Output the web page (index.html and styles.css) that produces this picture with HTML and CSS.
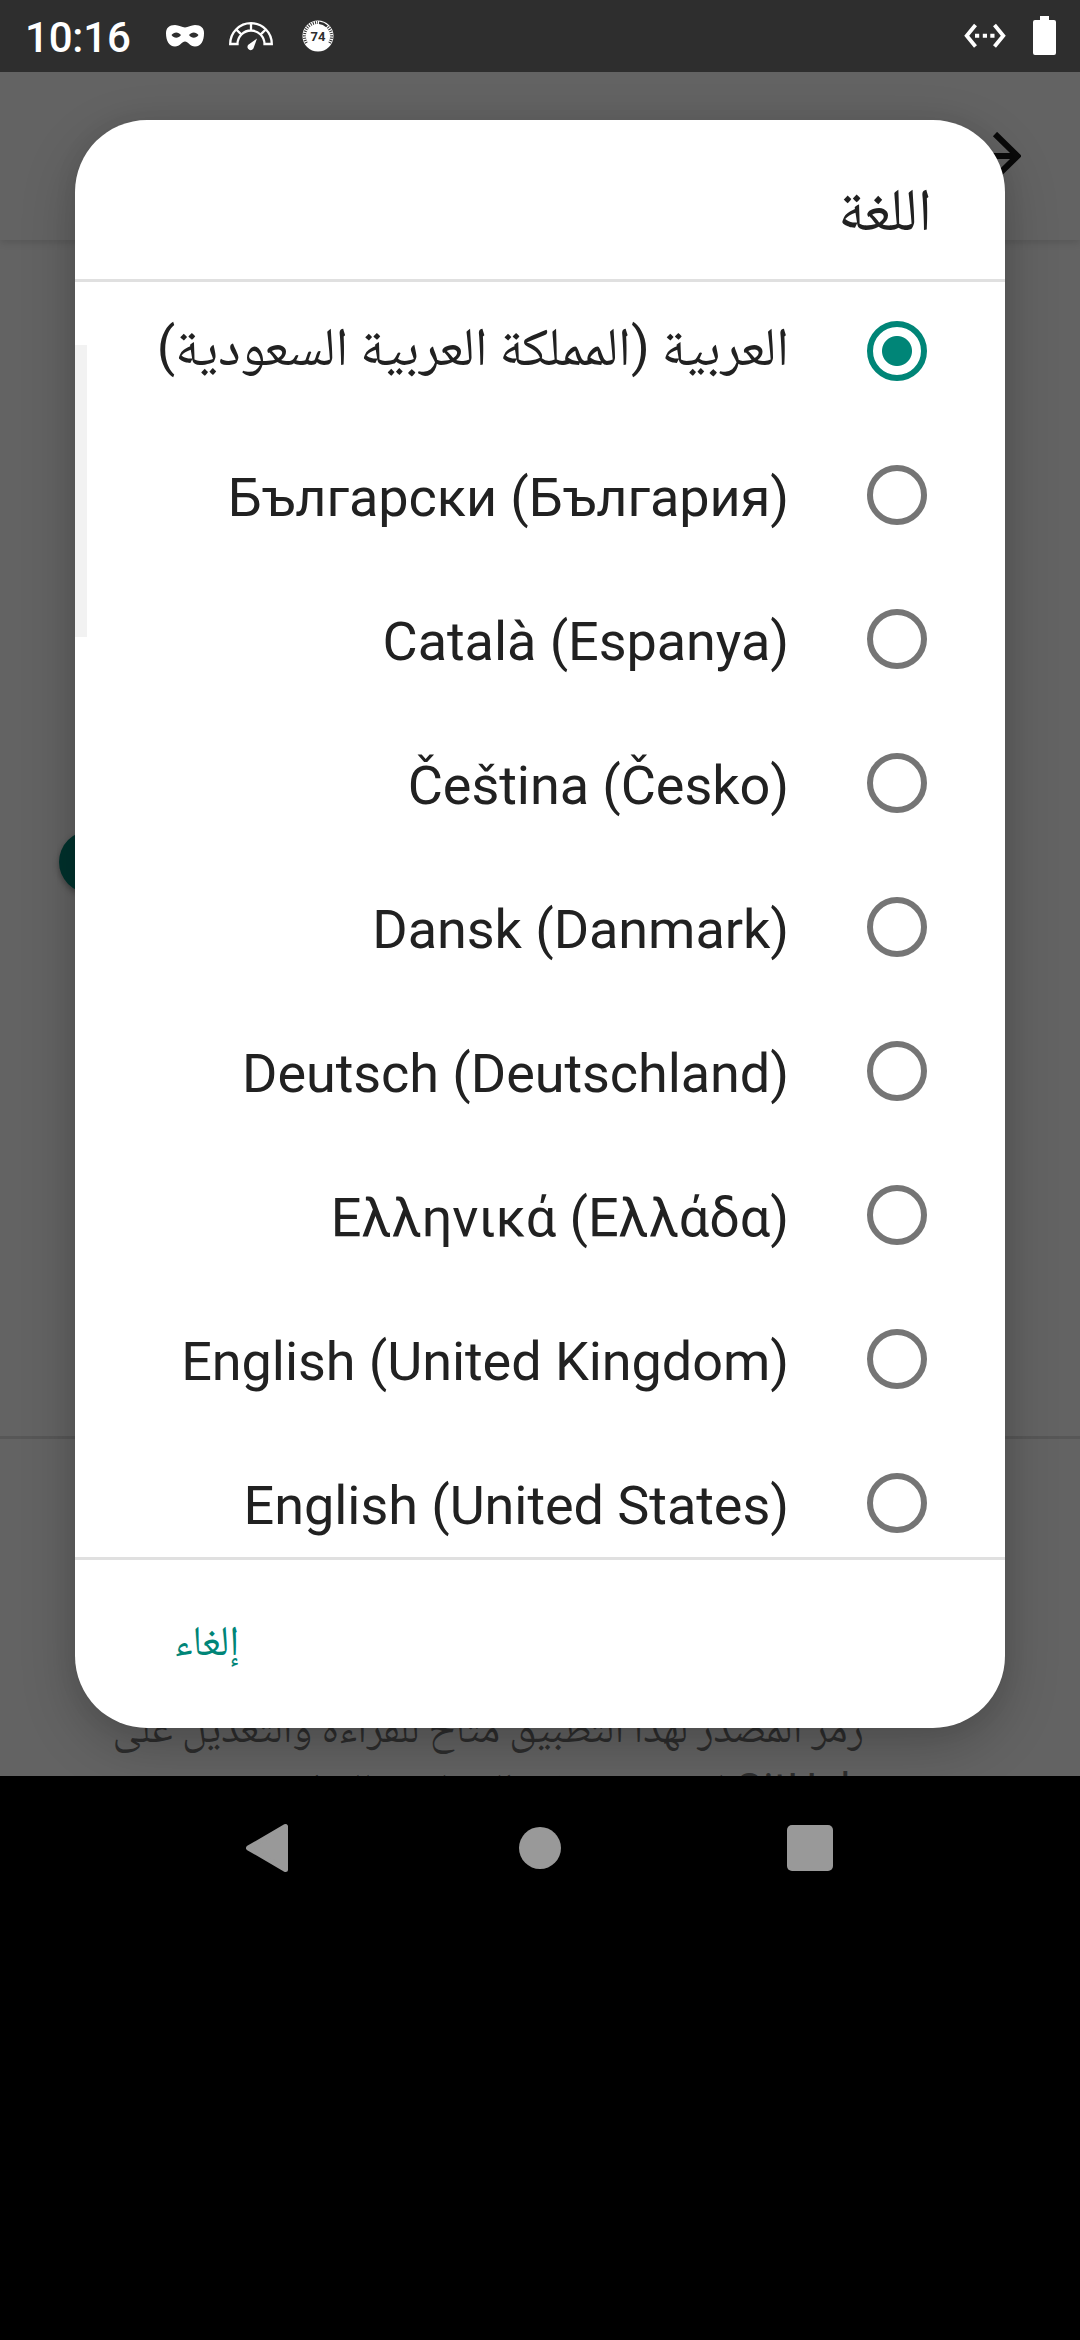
FILE: index.html
```html
<!DOCTYPE html>
<html lang="ar" dir="rtl">
<head>
<meta charset="utf-8">
<title>اللغة</title>
<link rel="stylesheet" href="styles.css">
</head>
<body>
<div class="phone">
  <header class="status" dir="ltr">
    <span class="clock">10:16</span>
    <svg class="ico-mask" width="40" height="24" viewBox="0 0 40 24"><path fill="#fff" fill-rule="evenodd" d="M10 1C14 1 17 3.500 20 3.500S26 1 30 1C36 1 39 4 39 9C39 17 36 22.500 30 22.500C25 22.500 23 17.500 20 17.500S15 22.500 10 22.500C4 22.500 1 17 1 9C1 4 4 1 10 1ZM6.500 11C9 14.500 13.500 14.500 16 11C13.500 7.500 9 7.500 6.500 11ZM24 11C26.500 14.500 31 14.500 33.500 11C31 7.500 26.500 7.500 24 11Z"/></svg>
    <svg class="ico-gauge" width="44" height="30" viewBox="0 0 44 30"><path fill="none" stroke="#fff" stroke-width="2.300" d="M1.200 22A20.800 20.800 0 0 1 42.800 22H35.500A13.500 13.500 0 0 0 8.500 22ZM22 1.500V8.500M7.300 7.500L12.500 12.600M36.700 7.500L31.500 12.600"/><path fill="#fff" d="M28 16.500L24.800 25.500A3.200 3.200 0 1 1 19.300 22.800Z"/></svg>
    <svg class="ico-badge" width="32" height="32" viewBox="0 0 32 32"><circle cx="16" cy="16" r="15.500" fill="#fff"/><path fill="none" stroke="#2e2e2e" stroke-width="3" stroke-dasharray="1 1.300" d="M4.400 23A13.500 13.500 0 0 1 16 2.500M26 7A13.500 13.500 0 0 1 27.600 23"/><path fill="none" stroke="#2e2e2e" stroke-width="2.500" d="M17 2.800A13.300 13.300 0 0 1 25 6.300"/><text x="16" y="20.500" text-anchor="middle" class="badge-text">74</text></svg>
    <svg class="ico-net" width="42" height="26" viewBox="0 0 42 26"><path fill="none" stroke="#fff" stroke-width="3.800" d="M11.500 2L2.700 12.700L11.500 23.500M30.500 2L39.300 12.700L30.500 23.500"/><path fill="#fff" d="M11 10.800h4.200v4H11zM18.800 10.800H23v4h-4.200zM26.300 10.800h4.200v4h-4.200z"/></svg>
    <svg class="ico-batt" width="23" height="39" viewBox="0 0 23 39"><path fill="#fff" d="M7 0H16V4H21Q23 4 23 6V37Q23 39 21 39H2Q0 39 0 37V6Q0 4 2 4H7Z"/></svg>
  </header>
  <main class="screen">
    <div class="appbar"><svg width="48" height="48" viewBox="0 0 48 48"><path fill="none" stroke="#0a0a0a" stroke-width="6" d="M0 24H44M22 2L44.500 24L22 46"/></svg></div>
    <section class="settings"><i class="thumb"></i></section>
    <section class="about"><p>رمز المصدر لهذا التطبيق متاح للقراءة والتعديل على</p><p>GitHub لمن يرغب في المساهمة للتطوير</p></section>
    <div class="dialog" role="dialog">
      <h1>اللغة</h1>
      <ul class="list">
        <li><i class="radio on"></i><span class="ar">العربية (المملكة العربية السعودية)</span></li>
        <li><i class="radio"></i><bdi>Български (България)</bdi></li>
        <li><i class="radio"></i><bdi>Català (Espanya)</bdi></li>
        <li><i class="radio"></i><bdi>Čeština (Česko)</bdi></li>
        <li><i class="radio"></i><bdi>Dansk (Danmark)</bdi></li>
        <li><i class="radio"></i><bdi>Deutsch (Deutschland)</bdi></li>
        <li><i class="radio"></i><bdi>Ελληνικά (Ελλάδα)</bdi></li>
        <li><i class="radio"></i><bdi>English (United Kingdom)</bdi></li>
        <li><i class="radio"></i><bdi>English (United States)</bdi></li>
      </ul>
      <footer><button type="button">إلغاء</button></footer>
      <i class="scrollbar"></i>
    </div>
  </main>
  <nav class="navbar" dir="ltr">
    <svg width="48" height="52" viewBox="0 0 48 52"><path fill="#999" stroke="#999" stroke-width="5" stroke-linejoin="round" d="M2.500 26L39.500 4.500V47.500Z"/></svg>
    <svg width="48" height="52" viewBox="0 0 48 52"><circle cx="24" cy="26" r="21" fill="#999"/></svg>
    <svg width="48" height="52" viewBox="0 0 48 52"><rect x="1" y="3" width="46" height="46" rx="5" fill="#999"/></svg>
  </nav>
</div>
</body>
</html>
```
FILE: styles.css
```css
* { box-sizing: border-box; margin: 0; padding: 0; }
body { width: 1080px; height: 2340px; background: #000; overflow: hidden; font-family: Roboto, "Noto Naskh Arabic", "Noto Sans Arabic", "DejaVu Sans", sans-serif; }
svg { display: block; flex: none; }
.status { height: 72px; background: #2e2e2e; display: flex; align-items: flex-start; color: #fff; padding-left: 25px; }
.clock { width: 140px; font-size: 42px; font-weight: 500; line-height: 72px; letter-spacing: -.2px; padding-top: 2px; }
.ico-mask { margin-top: 24px; }
.ico-gauge { margin: 22px 0 0 24px; }
.ico-badge { margin: 20px 0 0 29px; }
.badge-text { font-size: 13px; font-weight: 700; fill: #2e2e2e; }
.ico-net { margin: 23px 27px 0 auto; }
.ico-batt { margin: 16px 24px 0 0; }
.screen { position: relative; height: 1704px; background: #636363; overflow: hidden; }
.appbar { height: 168px; display: flex; align-items: center; padding-right: 59px; box-shadow: 0 2px 8px rgba(0,0,0,.14); }
.settings { height: 1199px; border-bottom: 3px solid #575757; position: relative; }
.thumb { position: absolute; left: 59px; top: 591px; width: 62px; height: 62px; border-radius: 50%; background: #00322d; box-shadow: 0 3px 6px rgba(0,0,0,.35); }
.about { padding: 258px 216px 0 0; color: #2d2d2d; font-size: 42px; line-height: 61px; white-space: nowrap; word-spacing: -1.200px; }
.dialog { position: absolute; left: 75px; top: 48px; width: 930px; height: 1608px; background: #fff; border-radius: 72px; box-shadow: 0 18px 54px rgba(0,0,0,.22), 0 0 24px rgba(0,0,0,.06); overflow: hidden; display: flex; flex-direction: column; color: #212121; }
.dialog h1 { height: 162px; flex: none; border-bottom: 3px solid #e0e0e0; font-size: 60px; font-weight: 400; line-height: 180px; padding-right: 73px; }
.list { list-style: none; height: 1275px; flex: none; overflow: hidden; }
.list li { height: 144px; display: flex; align-items: center; padding-right: 78px; font-size: 54px; white-space: nowrap; }
.list li:first-child { height: 141px; padding-bottom: 3px; }
.radio { width: 60px; height: 60px; border: 6px solid #757575; border-radius: 50%; margin-left: 78px; flex: none; }
.radio.on { border-color: #008577; background: radial-gradient(circle, #008577 14.500px, #fff 15.500px); }
.list bdi { padding-top: 4px; letter-spacing: -.06px; }
.ar { padding-top: 4px; word-spacing: -1.300px; }
.dialog footer { flex: 1; border-top: 3px solid #e0e0e0; display: flex; justify-content: flex-end; }
.dialog button { border: 0; background: none; font: 400 42px Roboto, "Noto Naskh Arabic", "DejaVu Sans", sans-serif; color: #008577; margin-left: 99px; padding-top: 3px; }
.scrollbar { position: absolute; left: 0; top: 225px; width: 12px; height: 292px; background: #f2f2f2; }
.navbar { height: 144px; display: flex; align-items: center; justify-content: space-between; padding: 0 246px; }
```
